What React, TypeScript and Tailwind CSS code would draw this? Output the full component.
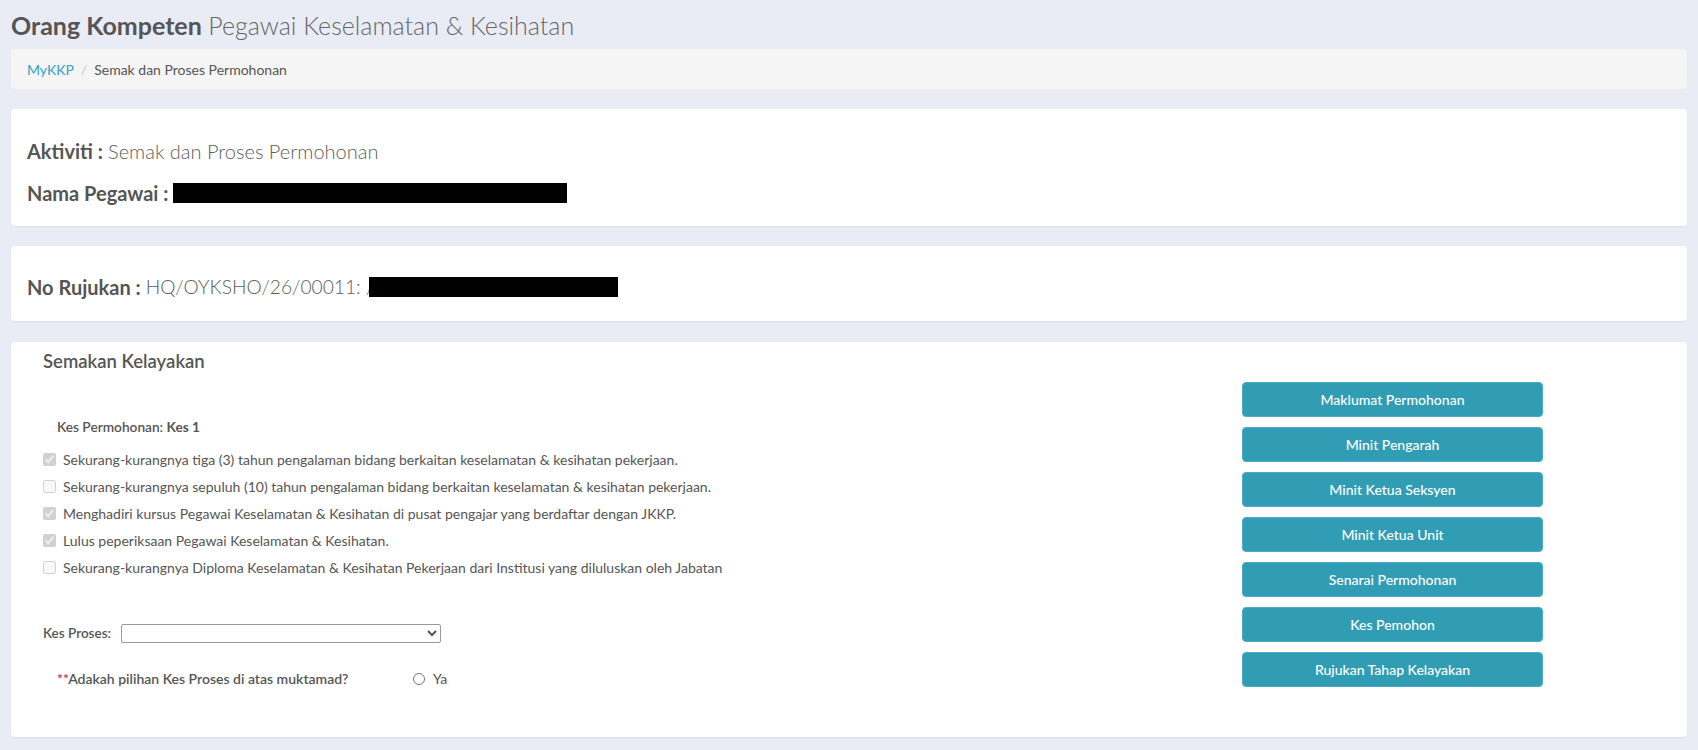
import React from "react";

const checks = [
  { text: "Sekurang-kurangnya tiga (3) tahun pengalaman bidang berkaitan keselamatan & kesihatan pekerjaan.", on: true },
  { text: "Sekurang-kurangnya sepuluh (10) tahun pengalaman bidang berkaitan keselamatan & kesihatan pekerjaan.", on: false },
  { text: "Menghadiri kursus Pegawai Keselamatan & Kesihatan di pusat pengajar yang berdaftar dengan JKKP.", on: true },
  { text: "Lulus peperiksaan Pegawai Keselamatan & Kesihatan.", on: true },
  { text: "Sekurang-kurangnya Diploma Keselamatan & Kesihatan Pekerjaan dari Institusi yang diluluskan oleh Jabatan", on: false },
];

const actions = [
  "Maklumat Permohonan",
  "Minit Pengarah",
  "Minit Ketua Seksyen",
  "Minit Ketua Unit",
  "Senarai Permohonan",
  "Kes Pemohon",
  "Rujukan Tahap Kelayakan",
];

function Card({ className, children }: { className: string; children: React.ReactNode }) {
  return <div className={`rounded-[4px] bg-white shadow-[0_1px_2px_rgba(0,0,0,0.06)] ${className}`}>{children}</div>;
}

export default function App() {
  return (
    <div className="min-h-screen bg-[#e9ecf5] px-[11px] pt-[11px] pb-[13px] font-['Lato','Noto_Sans',sans-serif] text-[#555]">
      <h1 className="text-[25px] leading-[28px]">
        <span className="font-bold text-[#555]">Orang Kompeten</span>{" "}
        <span className="font-light text-[#666]">Pegawai Keselamatan &amp; Kesihatan</span>
      </h1>

      <nav className="mt-[10px] flex h-[40px] items-center rounded-[4px] bg-[#f5f5f5] px-[16px] text-[14px]">
        <a className="text-[#2fa4c2]">MyKKP</a>
        <span className="px-[7px] text-[#ccc]">/</span>
        <span className="text-[#555]">Semak dan Proses Permohonan</span>
      </nav>

      <Card className="mt-[20px] px-[16px] pt-[31px] pb-[22px]">
        <h4 className="text-[20px] leading-[22px]">
          <b className="font-bold">Aktiviti :</b> <span className="font-light text-[#5c5c5c]">Semak dan Proses Permohonan</span>
        </h4>
        <h4 className="mt-[20px] flex items-center text-[20px] leading-[22px]">
          <b className="font-bold">Nama Pegawai :</b>
          <span className="ml-[5px] inline-block h-[20px] w-[394px] bg-black" />
        </h4>
      </Card>

      <Card className="mt-[20px] px-[16px] pt-[30px] pb-[23px]">
        <h4 className="flex items-center text-[20px] leading-[22px]">
          <b className="font-bold">No Rujukan :</b>
          <span className="ml-[5px] text-[19.2px] font-light text-[#5c5c5c]">HQ/OYKSHO/26/00011: /</span>
          <span className="-ml-[5px] inline-block h-[20px] w-[249px] bg-black" />
        </h4>
      </Card>

      <Card className="mt-[21px] pt-[9px]">
        <h3 className="px-[32px] text-[18.5px] font-semibold leading-[20px] text-[#555]">Semakan Kelayakan</h3>
        <div className="mt-[11px] flex">
          <div className="flex-1 pl-[32px] pt-[35px]">
            <p className="pl-[14px] text-[13.7px] font-semibold leading-[20px]">
              Kes Permohonan: <b className="font-bold">Kes 1</b>
            </p>
            <ul className="mt-[9px]">
              {checks.map((c) => (
                <li key={c.text} className="flex h-[27px] items-center text-[14px] text-[#555]">
                  <input type="checkbox" disabled defaultChecked={c.on} className="m-0 h-[13px] w-[13px]" />
                  <span className="ml-[7px]">{c.text}</span>
                </li>
              ))}
            </ul>
            <div className="mt-[42px] flex items-center text-[13.5px] font-semibold">
              <label className="w-[78px]">Kes Proses:</label>
              <select className="h-[19px] w-[320px] rounded-[2px] border border-[#999] bg-white text-[12px]">
                <option value=""></option>
              </select>
            </div>
            <div className="mt-[26px] flex items-center pl-[14px] text-[14px] leading-[20px]">
              <span className="w-[356px] font-semibold">
                <span className="text-[#e0263a]">**</span>Adakah pilihan Kes Proses di atas muktamad?
              </span>
              <input type="radio" name="muktamad" className="m-0 h-[12px] w-[12px]" />
              <span className="ml-[8px]">Ya</span>
            </div>
          </div>
          <div className="mr-[144px] flex w-[301px] flex-col gap-[10px] pb-[50px]">
            {actions.map((a) => (
              <button
                key={a}
                className="h-[35px] w-full rounded-[4px] border border-[#4eabc1] bg-[#319db5] text-[14px] font-medium text-white"
              >
                {a}
              </button>
            ))}
          </div>
        </div>
      </Card>
    </div>
  );
}
